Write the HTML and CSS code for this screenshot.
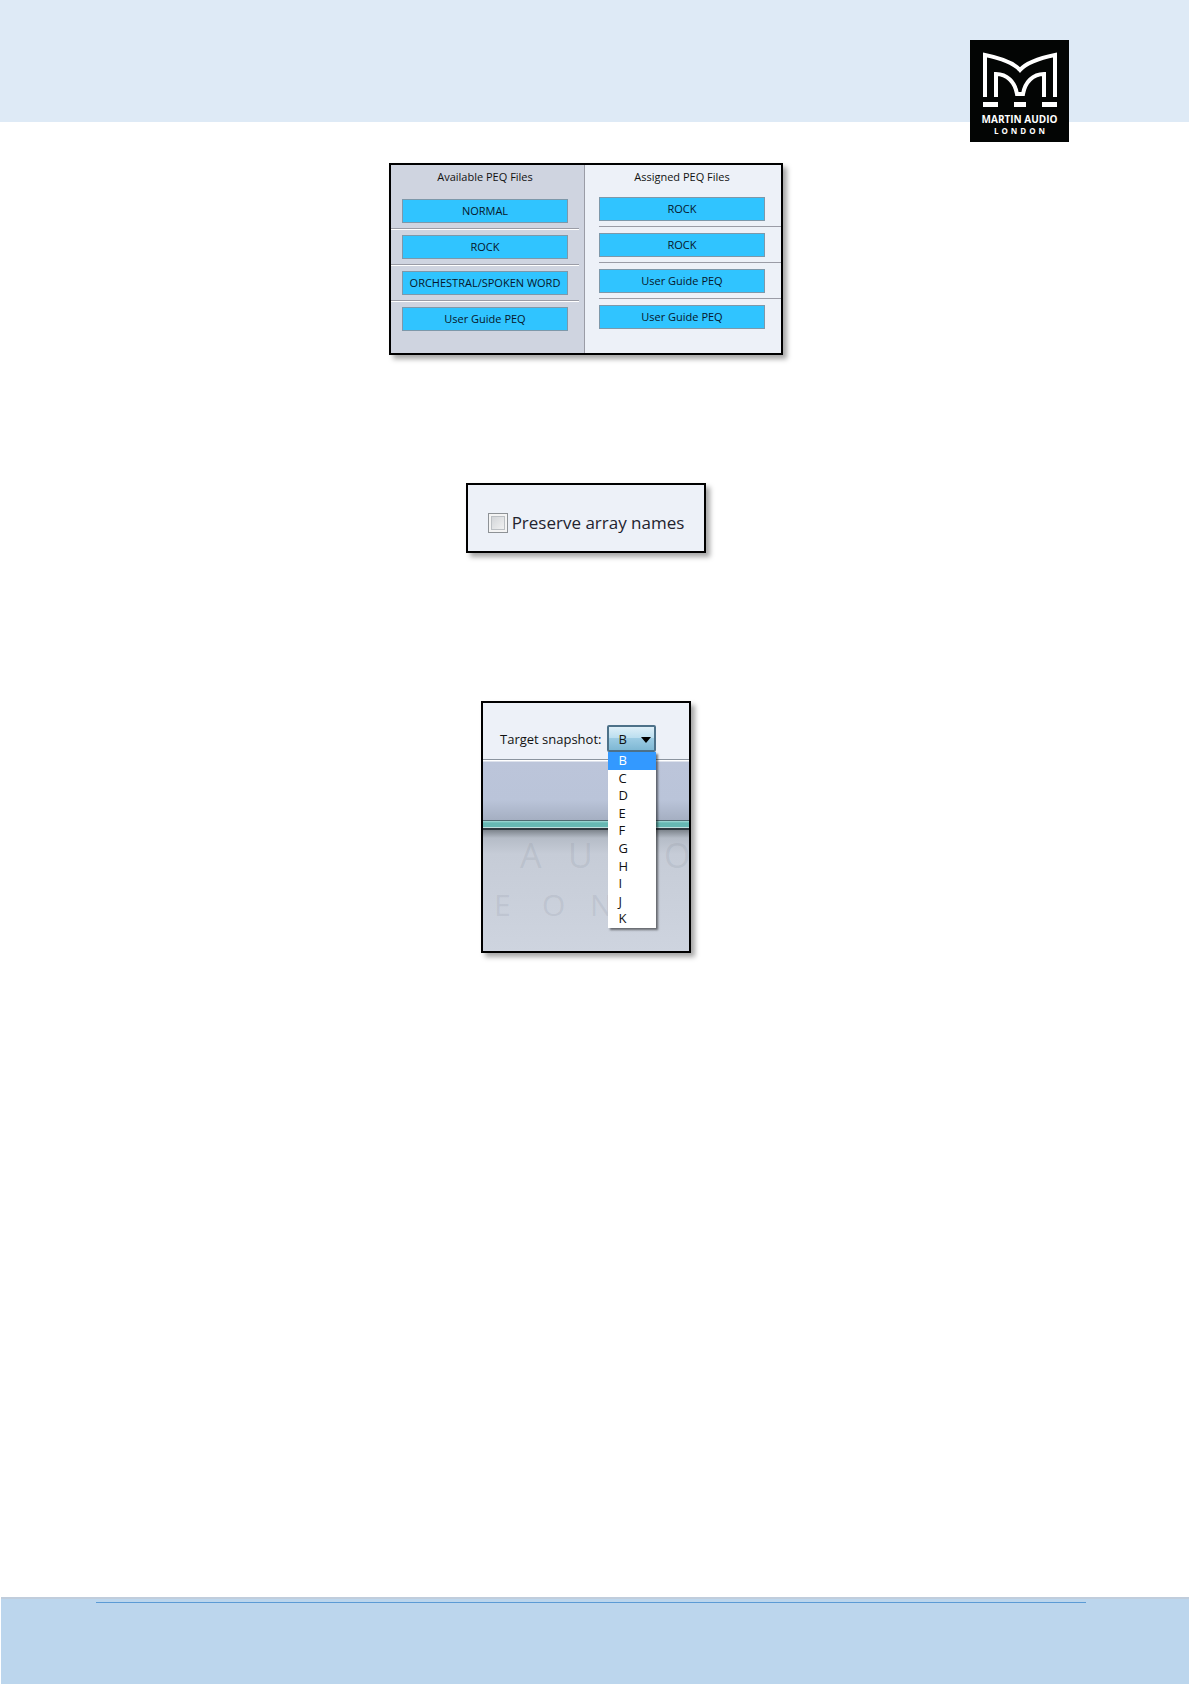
FILE: index.html
```html
<!DOCTYPE html>
<html lang="en">
<head>
    <meta charset="UTF-8">
    <meta name="viewport" content="width=device-width, initial-scale=1.0">
    <title>Martin Audio London - User Guide</title>
    <link rel="stylesheet" href="styles.css">
</head>
<body>
    <header class="page-header">
        <div class="logo">
            <svg class="logo-mark" viewBox="0 0 74 56" aria-hidden="true">
                <path d="M2 45V3C17 6 30 10 37 18C44 10 57 6 72 3V45" fill="none" stroke="#fff" stroke-width="4"/>
                <path d="M13 45V22C24 22 32 30 34 42H40C42 30 50 22 61 22V45" fill="none" stroke="#fff" stroke-width="4"/>
                <path d="M0 50H15V55H0ZM31 50H43V55H31ZM59 50H74V55H59Z" fill="#fff"/>
            </svg>
            <span class="logo-name">MARTIN AUDIO</span>
            <span class="logo-city">LONDON</span>
        </div>
    </header>

    <main class="page">
        <section class="figure peq">
            <div class="pane available">
                <h2>Available PEQ Files</h2>
                <ul>
                    <li><button type="button">NORMAL</button></li>
                    <li><button type="button">ROCK</button></li>
                    <li><button type="button">ORCHESTRAL/SPOKEN WORD</button></li>
                    <li><button type="button">User Guide PEQ</button></li>
                </ul>
            </div>
            <div class="pane assigned">
                <h2>Assigned PEQ Files</h2>
                <ul>
                    <li><button type="button">ROCK</button></li>
                    <li><button type="button">ROCK</button></li>
                    <li><button type="button">User Guide PEQ</button></li>
                    <li><button type="button">User Guide PEQ</button></li>
                </ul>
            </div>
        </section>

        <section class="figure preserve">
            <input type="checkbox" id="preserve">
            <label for="preserve">Preserve array names</label>
        </section>

        <section class="figure snapshot">
            <div class="snapshot-bar">
                <label for="target">Target snapshot:</label>
                <div class="dropdown">
                    <select id="target">
                        <option selected>B</option>
                        <option>C</option>
                        <option>D</option>
                        <option>E</option>
                        <option>F</option>
                        <option>G</option>
                        <option>H</option>
                        <option>I</option>
                        <option>J</option>
                        <option>K</option>
                    </select>
                    <svg class="arrow" viewBox="0 0 10 6" aria-hidden="true"><path d="M0 0H10L5 6Z"/></svg>
                    <ul class="menu" role="listbox" aria-label="Target snapshot">
                        <li class="active" role="option" aria-selected="true">B</li>
                        <li role="option">C</li>
                        <li role="option">D</li>
                        <li role="option">E</li>
                        <li role="option">F</li>
                        <li role="option">G</li>
                        <li role="option">H</li>
                        <li role="option">I</li>
                        <li role="option">J</li>
                        <li role="option">K</li>
                    </ul>
                </div>
            </div>
            <div class="snapshot-band"></div>
            <div class="snapshot-body">
                <!-- embossed lettering behind the menu -->
                <div class="emboss" aria-hidden="true"><span>A</span><span>U</span><span></span><span>O</span></div>
                <div class="emboss small" aria-hidden="true"><span>E</span><span>O</span><span>N</span></div>
            </div>
        </section>
    </main>

    <footer class="page-footer"><hr></footer>
</body>
</html>
```

FILE: styles.css
```css
* {
    box-sizing: border-box;
}
body {
    display: flex;
    flex-direction: column;
    min-height: 100vh;
    margin: 0;
    background: #fff;
    color: #111;
    font-family: "Open Sans", "Noto Sans", sans-serif;
    font-size: 11px;
}
ul {
    margin: 0;
    padding: 0;
    list-style: none;
}
.page-header {
    display: flex;
    justify-content: flex-end;
    height: 122px;
    margin-right: 2px;
    padding: 40px 120px 0 0;
    background: #deeaf6;
}
.logo {
    display: flex;
    flex-direction: column;
    align-items: center;
    width: 99px;
    height: 102px;
    padding-top: 12px;
    background: #030504;
    color: #fff;
}
.logo-mark {
    width: 74px;
    height: 56px;
}
.logo-name {
    margin-top: 6px;
    font-size: 10px;
    font-weight: 700;
    line-height: 11px;
}
.logo-city {
    padding-left: 3px;
    font-size: 8px;
    font-weight: 700;
    line-height: 11px;
    letter-spacing: 3px;
}
.page {
    display: flex;
    flex: 1;
    flex-direction: column;
    align-items: center;
    padding: 41px 19px 0 0;
}
.figure {
    border: 2px solid #000;
    box-shadow: 4px 4px 5px rgba(0, 0, 0, 0.35);
    background: #edf1f8;
}

/* PEQ files */
.peq {
    display: flex;
    width: 394px;
}
.pane {
    flex: 1;
    padding: 3px 0 22px;
}
.pane h2 {
    width: 166px;
    margin: 0 0 11px;
    font-size: 11px;
    font-weight: 400;
    line-height: 18px;
    text-align: center;
}
.pane li {
    padding-bottom: 5px;
    border-bottom: 1px solid #9a9ca6;
}
.pane li + li {
    padding-top: 6px;
}
.pane li:last-child {
    padding-bottom: 0;
    border-bottom: 0;
}
.pane button {
    display: block;
    width: 166px;
    height: 24px;
    padding: 0;
    border: 1px solid #7d98aa;
    background: #30c4ff;
    color: #06162a;
    font: inherit;
    line-height: 22px;
    white-space: nowrap;
}
.available {
    flex: 0 0 194px;
    padding-right: 5px;
    border-right: 1px solid #9a9ca6;
    background: #cfd4e0;
}
.available h2 {
    margin: 0 0 13px 11px;
}
.available li {
    padding-left: 11px;
}
.available li:not(:last-child) {
    box-shadow: 0 1px #fff;
}
.assigned {
    padding-left: 14px;
}

/* Preserve array names */
.preserve {
    display: flex;
    align-items: center;
    gap: 4px;
    height: 70px;
    margin-top: 128px;
    padding: 9px 20px 0;
    color: #23232f;
    font-size: 17px;
}
.preserve input {
    appearance: none;
    width: 20px;
    height: 20px;
    margin: 0;
    border: 1px solid #8e9296;
    background: linear-gradient(135deg, #cbced2, #f8f8f8);
    box-shadow: inset 0 0 0 2px #f4f4f4, inset 0 0 0 3px #bcc0c4;
}

/* Target snapshot */
.snapshot {
    width: 210px;
    margin-top: 148px;
}
.snapshot-bar {
    display: flex;
    align-items: center;
    gap: 6px;
    padding: 22px 0 7px 17px;
    border-bottom: 1px solid #8b949f;
    font-size: 13px;
}
.dropdown {
    position: relative;
}
.dropdown select {
    appearance: none;
    display: block;
    width: 49px;
    height: 27px;
    padding: 0 9px;
    border: 2px solid #4d7189;
    border-radius: 2px;
    background: linear-gradient(#deeff8, #b9ddef 50%, #9bcbe3 50%, #7fb8d4);
    color: #111;
    font: inherit;
}
.arrow {
    position: absolute;
    top: 12px;
    right: 5px;
    width: 10px;
    height: 6px;
}
.menu {
    position: absolute;
    top: 27px;
    left: 1px;
    display: grid;
    grid-auto-rows: 1fr;
    width: 48px;
    height: 176px;
    background: #fff;
    box-shadow: 2px 2px 2px rgba(0, 0, 0, 0.5);
    line-height: 17px;
}
.menu li {
    padding-left: 10px;
}
.menu .active {
    background: #3399ff;
    color: #fff;
}
.snapshot-band {
    height: 70px;
    background: linear-gradient(#fff 1px, #bcc5da 2px, #bac4d9 40px, #a5afc2 60px, #4f6a72 60px, #4f6a72 61px, #a5dcd8 61px, #66b8b3 63px, #66b8b3 67px, #c0dede 67px, #c0dede 68px, #2f3940 68px);
}
.snapshot-body {
    height: 121px;
    overflow: hidden;
    background: linear-gradient(#7d848c, #b5bcc7 8px, #c6ccd7 24px, #ced4df);
}
.emboss {
    display: grid;
    grid-template-columns: repeat(4, 48px);
    padding-left: 37px;
    color: rgba(110, 118, 132, 0.14);
    font-size: 34px;
    line-height: 50px;
}
.emboss.small {
    grid-template-columns: repeat(3, 48px);
    padding-left: 11px;
    font-size: 30px;
}

.page-footer {
    height: 87px;
    margin: 0 2px 0 1px;
    padding: 3px 103px 0 95px;
    border-top: 2px solid #c0cddc;
    background: #bcd6ed;
}
.page-footer hr {
    margin: 0;
    border: 0;
    border-top: 1px solid #5b9bd5;
}
```
